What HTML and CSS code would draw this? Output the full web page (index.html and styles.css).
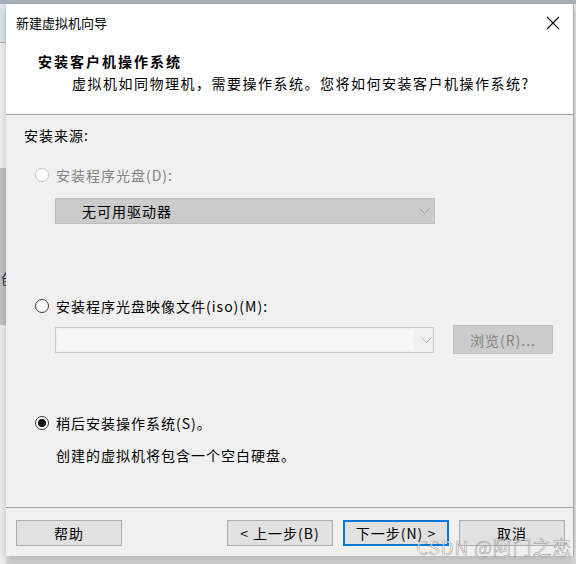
FILE: index.html
```html
<!DOCTYPE html>
<html lang="zh-CN">
<head>
<meta charset="utf-8">
<title>新建虚拟机向导</title>
<link rel="stylesheet" href="styles.css">
</head>
<body>
<div class="screen">
  <div class="behind">
    <div class="bh-top"></div>
    <div class="bh-line"></div>
    <div class="bh-light"></div>
    <div class="bh-grey"><span class="bh-char">创</span></div>
    <div class="bh-rest"></div>
  </div>
  <div class="dialog">
    <div class="titlebar">
      <span class="title">新建虚拟机向导</span>
      <svg class="close" width="14" height="14" viewBox="0 0 14 14"><path d="M1 1 L13 13 M13 1 L1 13" stroke="#000" stroke-width="1.1" fill="none"/></svg>
    </div>
    <div class="header">
      <div class="h-title">安装客户机操作系统</div>
      <div class="h-sub">虚拟机如同物理机，需要操作系统。您将如何安装客户机操作系统?</div>
    </div>
    <div class="body">
      <div class="src-label">安装来源:</div>
      <div class="radio-row r1 disabled">
        <span class="radio radio-dis"></span>
        <span class="lbl">安装程序光盘(D):</span>
      </div>
      <div class="combo combo-dis">
        <span class="combo-text">无可用驱动器</span>
        <svg class="chev" width="11" height="6" viewBox="0 0 11 6"><polyline points="0.5,0.5 5.5,5.5 10.5,0.5" fill="none" stroke="#9a9a9a" stroke-width="1"/></svg>
      </div>
      <div class="radio-row r2">
        <span class="radio"></span>
        <span class="lbl">安装程序光盘映像文件(iso)(M):</span>
      </div>
      <div class="iso-row">
        <div class="combo combo-iso">
          <div class="iso-edit"></div>
          <svg class="chev" width="11" height="6" viewBox="0 0 11 6"><polyline points="0.5,0.5 5.5,5.5 10.5,0.5" fill="none" stroke="#b8b8b8" stroke-width="1"/></svg>
        </div>
        <div class="browse">浏览(R)...</div>
      </div>
      <div class="radio-row r3">
        <span class="radio radio-on"></span>
        <span class="lbl">稍后安装操作系统(S)。</span>
      </div>
      <div class="desc">创建的虚拟机将包含一个空白硬盘。</div>
    </div>
    <div class="footer">
      <div class="btn">帮助</div>
      <div class="spacer"></div>
      <div class="btn">&lt; 上一步(B)</div>
      <div class="btn btn-focus">下一步(N) &gt;</div>
      <div class="btn">取消</div>
    </div>
  </div>
  <div class="watermark">CSDN @阿门之恋</div>
</div>
</body>
</html>
```

FILE: styles.css
```css
* { box-sizing: border-box; }
html, body { margin: 0; padding: 0; }
body {
  width: 576px;
  height: 564px;
  overflow: hidden;
  background: #e9e9e9;
  font-family: "Noto Sans CJK SC", "Noto Sans", sans-serif;
  color: #000;
}
.screen {
  position: relative;
  width: 576px;
  height: 564px;
  display: flex;
  align-items: flex-start;
  background: linear-gradient(#a7afbd 0, #a7afbd 4px, #e6e6e6 4px, #e6e6e6 556px, #d4d4d4 564px);
}
.behind {
  width: 6px;
  height: 564px;
  display: flex;
  flex-direction: column;
  flex: none;
}
.bh-top { height: 42px; background: #dde3ec; border-top: 4px solid #a7afbd; }
.bh-line { height: 1px; background: #a9b1bf; }
.bh-light { height: 125px; background: #f1f1f1; }
.bh-grey { height: 157px; background: #c3c3c3; overflow: hidden; display: flex; justify-content: flex-end; align-items: flex-start; }
.bh-char { font-size: 14px; line-height: 20px; margin-top: 100px; margin-right: -9px; color: #1b2a5a; }
.bh-rest { flex: 1; background: #efefef; }

.dialog {
  width: 568px;
  height: 552px;
  margin-top: 4px;
  display: flex;
  flex-direction: column;
  background: #f0f0f0;
  border-right: 1px solid #a9a9a9;
  box-shadow: 0 4px 8px rgba(0,0,0,0.22);
}
.titlebar {
  height: 38px;
  background: #fff;
  display: flex;
  align-items: center;
  padding-left: 10px;
  padding-right: 13px;
}
.title { font-size: 13px; line-height: 38px; flex: 1; }
.close { display: block; }

.header {
  height: 73px;
  background: #fff;
  border-bottom: 1px solid #a0a0a0;
  padding-top: 9px;
}
.h-title {
  font-size: 14px;
  font-weight: bold;
  letter-spacing: 2px;
  line-height: 20px;
  padding-left: 32px;
}
.h-sub {
  font-size: 14px;
  letter-spacing: 1.5px;
  line-height: 20px;
  margin-top: 2px;
  padding-left: 66px;
}

.body {
  height: 392px;
  padding-top: 10px;
  display: flex;
  flex-direction: column;
  font-size: 14px;
  letter-spacing: 1px;
}
.src-label { line-height: 20px; padding-left: 18px; }
.radio-row {
  height: 20px;
  display: flex;
  align-items: center;
  padding-left: 29px;
}
.r1 { margin-top: 20px; }
.r2 { margin-top: 72px; }
.r3 { margin-top: 59px; }
.radio {
  width: 14px;
  height: 14px;
  border-radius: 50%;
  border: 1px solid #333;
  background: #fff;
  margin-right: 7px;
  display: flex;
  align-items: center;
  justify-content: center;
  flex: none;
}
.radio-dis { border-color: #c4c4c4; }
.radio-on::after {
  content: "";
  width: 8px;
  height: 8px;
  border-radius: 50%;
  background: #111;
}
.lbl { line-height: 20px; }
.disabled .lbl { color: #838383; }

.combo {
  margin-left: 49px;
  width: 380px;
  height: 26px;
  display: flex;
  align-items: center;
  flex: none;
}
.combo-dis {
  margin-top: 13px;
  background: #cccccc;
  border: 1px solid #bcbcbc;
  padding-left: 26px;
  padding-right: 4px;
}
.combo-text { flex: 1; line-height: 20px; color: #000; }
.chev { display: block; flex: none; }

.iso-row {
  margin-top: 9px;
  height: 29px;
  display: flex;
  align-items: center;
}
.combo-iso {
  width: 379px;
  background: #f0f0f0;
  border: 1px solid #c9c9c9;
  padding: 2px 4px 2px 2px;
}
.iso-edit {
  flex: none;
  width: 355px;
  height: 20px;
  background: #f7f7f7;
  margin-right: 8px;
}
.browse {
  margin-left: 19px;
  width: 100px;
  height: 29px;
  background: #cccccc;
  border: 1px solid #bfbfbf;
  color: #838383;
  display: flex;
  align-items: center;
  justify-content: center;
  line-height: 20px;
}
.desc {
  margin-top: 12px;
  line-height: 20px;
  padding-left: 50px;
}

.footer {
  height: 49px;
  border-top: 1px solid #a0a0a0;
  padding: 12px 8px 0 10px;
  display: flex;
  align-items: flex-start;
  gap: 10px;
  background: #f0f0f0;
}
.spacer { flex: 1; }
.btn {
  width: 106px;
  height: 26px;
  background: #e1e1e1;
  border: 1px solid #adadad;
  font-size: 14px;
  letter-spacing: 1px;
  display: flex;
  align-items: center;
  justify-content: center;
  line-height: 20px;
  flex: none;
}
.btn-focus { border: 2px solid #0078d7; }

.watermark {
  position: absolute;
  left: 416px;
  top: 534px;
  font-family: "Noto Sans CJK SC", "Noto Sans", sans-serif;
  font-size: 19px;
  letter-spacing: 0.8px;
  line-height: 26px;
  color: rgba(255,255,255,0.6);
  -webkit-text-stroke: 0.6px rgba(110,110,110,0.65);
  white-space: nowrap;
}
```
